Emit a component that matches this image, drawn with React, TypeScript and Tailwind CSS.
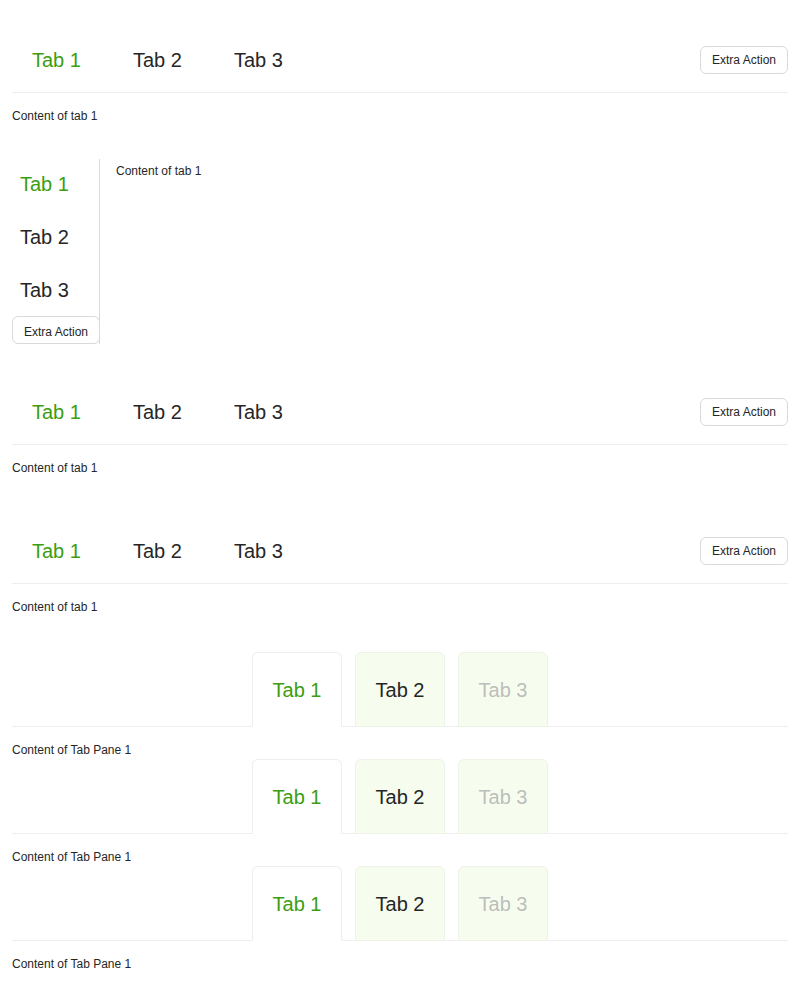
const font = { fontFamily: '"Liberation Sans", Arial, sans-serif' };

function ExtraButton() {
  return (
    <button className="h-[28px] whitespace-nowrap rounded-md border border-[#d9d9d9] bg-white px-[11px] text-[12px] text-[#262626]">
      Extra Action
    </button>
  );
}

function LineTabs({ mt }: { mt: string }) {
  return (
    <div className={mt}>
      <div className="flex h-[66px] items-center justify-between border-b border-[#eeeeee]">
        <div className="flex gap-[52px] pl-5 text-[20px] text-[#262626]">
          <span className="text-[#3a9e10]">Tab 1</span>
          <span>Tab 2</span>
          <span>Tab 3</span>
        </div>
        <ExtraButton />
      </div>
      <p className="mt-[14px] text-[12px] text-[#262626]">Content of tab 1</p>
    </div>
  );
}

function CardTabs({ mt }: { mt: string }) {
  const tabs = [
    { label: 'Tab 1', cls: 'bg-white text-[#3a9e10] border-[#eeeeee]' },
    { label: 'Tab 2', cls: 'bg-[#f6fdee] text-[#262626] border-[#eef3e8]' },
    { label: 'Tab 3', cls: 'bg-[#f6fdee] text-[#bdbdbd] border-[#eef3e8]' },
  ];
  return (
    <div className={mt}>
      <div className="flex justify-center gap-[13px] border-b border-[#eeeeee]">
        {tabs.map((t, i) => (
          <div
            key={t.label}
            className={`-mb-px flex h-[75px] w-[90px] items-center justify-center rounded-t-md border text-[20px] ${t.cls} ${i === 0 ? 'border-b-white' : ''}`}
          >
            {t.label}
          </div>
        ))}
      </div>
      <p className="mt-[14px] text-[12px] text-[#262626]">Content of Tab Pane 1</p>
    </div>
  );
}

export default function App() {
  return (
    <div className="min-h-[998px] bg-white px-3 pt-[27px]" style={font}>
      <LineTabs mt="mt-0" />
      <div className="mt-[34px] flex">
        <div className="flex h-[185px] w-[88px] flex-col border-r border-[#d9d9d9] text-[20px] leading-[30px] text-[#262626]">
          <span className="pl-2 pt-[10px] text-[#3a9e10]">Tab 1</span>
          <span className="pl-2 pt-[23px]">Tab 2</span>
          <span className="pl-2 pt-[23px]">Tab 3</span>
          <div className="mt-auto">
            <ExtraButton />
          </div>
        </div>
        <p className="pl-4 pt-[3px] text-[12px] text-[#262626]">Content of tab 1</p>
      </div>
      <LineTabs mt="mt-[35px]" />
      <LineTabs mt="mt-[41px]" />
      <CardTabs mt="mt-[36px]" />
      <CardTabs mt="mt-0" />
      <CardTabs mt="mt-0" />
    </div>
  );
}
